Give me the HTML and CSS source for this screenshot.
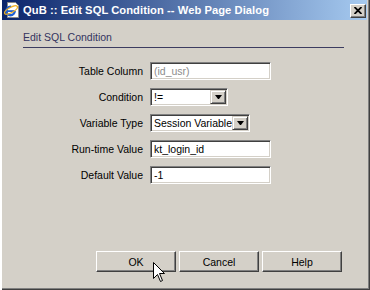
FILE: index.html
```html
<!DOCTYPE html>
<html lang="en">
<head>
    <meta charset="UTF-8">
    <title>QuB :: Edit SQL Condition -- Web Page Dialog</title>
    <link rel="stylesheet" href="styles.css">
</head>
<body>
    <div class="window">
        <div class="titlebar">
            <svg class="app-icon" width="16" height="16" viewBox="0 0 16 16">
                <polygon points="4.5,0.5 12.5,0.5 15.5,3.5 15.5,15.5 4.5,15.5" fill="#fff" stroke="#8a8a8a"/>
                <circle cx="7.5" cy="9" r="4.2" fill="none" stroke="#1f5fd0" stroke-width="2.4" stroke-dasharray="20 6.4"/>
                <rect x="4" y="8.2" width="7.5" height="1.8" fill="#1f5fd0"/>
                <ellipse cx="8" cy="8" rx="7.2" ry="2.6" fill="none" stroke="#f0b020" stroke-width="1.2" transform="rotate(-30 8 8)"/>
            </svg>
            <span class="title">QuB :: Edit SQL Condition -- Web Page Dialog</span>
            <div class="close">
                <svg width="8" height="7" viewBox="0 0 8 7">
                    <path d="M0.5 0 L7.5 7 M7.5 0 L0.5 7" stroke="#000" stroke-width="1.8"/>
                </svg>
            </div>
        </div>

        <div class="content">
            <div class="heading">Edit SQL Condition</div>

            <div class="form">
                <div class="label">Table Column</div>
                <div class="input disabled">(id_usr)</div>

                <div class="label">Condition</div>
                <div class="select cond">
                    <span class="value">!=</span>
                    <span class="arrow"><i></i></span>
                </div>

                <div class="label">Variable Type</div>
                <div class="select vartype">
                    <span class="value">Session Variable</span>
                    <span class="arrow"><i></i></span>
                </div>

                <div class="label">Run-time Value</div>
                <div class="input">kt_login_id</div>

                <div class="label">Default Value</div>
                <div class="input">-1</div>
            </div>

            <div class="actions">
                <div class="btn">OK</div>
                <div class="btn">Cancel</div>
                <div class="btn">Help</div>
            </div>
        </div>

        <!-- mouse pointer over the OK button -->
        <svg class="cursor" width="13" height="21" viewBox="0 0 13 21">
            <path d="M0.5 0.5 L0.5 16.5 L4.5 12.5 L7.5 19.5 L9.5 18.5 L6.5 11.5 L11.5 11.5 Z" fill="#fff" stroke="#000" stroke-linejoin="miter"/>
        </svg>
    </div>
</body>
</html>
```

FILE: styles.css
```css
body {
    margin: 0;
    font-family: "Liberation Sans", Arial, sans-serif;
    font-size: 10.5px;
    color: #000;
    background: #d4d0c8;
}
.window {
    position: relative;
    width: 370px;
    height: 290px;
    box-sizing: border-box;
    padding: 0 3px 3px 2px;
    background: #d4d0c8;
    display: flex;
    flex-direction: column;
    box-shadow: inset 2px 0 #fff, inset 1px 0 #d4d0c8, inset -1px -1px #404040, inset -2px -2px #808080, inset -3px -3px #d4d0c8;
}
.titlebar {
    height: 20px;
    display: flex;
    align-items: center;
    background: linear-gradient(to right, #0a246a, #a6caf0);
}
.app-icon {
    margin-left: 1px;
    flex: none;
}
.title {
    margin-left: 4px;
    flex: 1;
    color: #fff;
    font-weight: bold;
    font-size: 11.2px;
    letter-spacing: 0.05px;
    white-space: nowrap;
}
.close {
    width: 16px;
    height: 14px;
    box-sizing: border-box;
    margin: 1px 1px 0 0;
    display: flex;
    align-items: center;
    justify-content: center;
    background: #d4d0c8;
    border: 1px solid;
    border-color: #fff #404040 #404040 #fff;
    box-shadow: inset -1px -1px #808080;
}
.content {
    flex: 1;
    display: flex;
    flex-direction: column;
}
.heading {
    margin: 11px 23px 0 21px;
    padding-bottom: 3px;
    line-height: 13px;
    color: #33335f;
    border-bottom: 1px solid #3c3c60;
}
.form {
    margin: 14px 0 0 6px;
    display: grid;
    grid-template-columns: 135px auto;
    column-gap: 7px;
    row-gap: 8px;
    align-items: center;
    justify-items: start;
}
.label {
    justify-self: end;
}
.input, .select {
    height: 18px;
    box-sizing: border-box;
    background: #fff;
    border: 1px solid;
    border-color: #808080 #fff #fff #808080;
    box-shadow: inset 1px 1px #404040, inset -1px -1px #d4d0c8;
    line-height: 16px;
}
.input {
    width: 121px;
    padding-left: 3px;
}
.input.disabled {
    color: #8c8c8c;
}
.select {
    display: flex;
    padding: 1px;
}
.select.cond {
    width: 78px;
}
.select.vartype {
    width: 100px;
}
.select .value {
    flex: 1;
    min-width: 0;
    overflow: hidden;
    padding-left: 2px;
    line-height: 14px;
    white-space: nowrap;
}
.select .arrow {
    flex: none;
    width: 16px;
    box-sizing: border-box;
    display: flex;
    align-items: center;
    justify-content: center;
    background: #d4d0c8;
    border: 1px solid;
    border-color: #d4d0c8 #404040 #404040 #d4d0c8;
    box-shadow: inset 1px 1px #fff, inset -1px -1px #808080;
}
.select .arrow i {
    width: 1px;
    height: 0;
    border-top: 4px solid #000;
    border-left: 3px solid transparent;
    border-right: 3px solid transparent;
}
.actions {
    margin-top: auto;
    padding: 0 25px 15px 0;
    display: flex;
    justify-content: flex-end;
    gap: 3px;
}
.btn {
    width: 80px;
    height: 21px;
    box-sizing: border-box;
    display: flex;
    align-items: center;
    justify-content: center;
    border: 1px solid;
    border-color: #fff #404040 #404040 #fff;
    box-shadow: inset -1px -1px #808080;
}
.cursor {
    position: absolute;
    left: 153px;
    top: 262px;
}
```
